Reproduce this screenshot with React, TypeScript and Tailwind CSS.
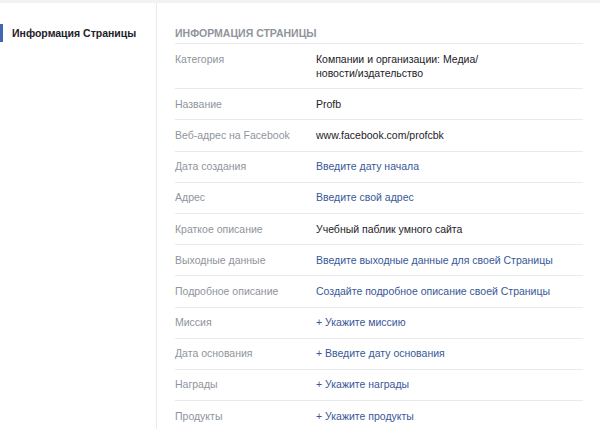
const rows: { label: string; value: React.ReactNode; link?: boolean }[] = [
  {
    label: "Категория",
    value: (
      <>
        Компании и организации: Медиа/ <span className="whitespace-nowrap">новости/издательство</span>
      </>
    ),
  },
  { label: "Название", value: "Profb" },
  { label: "Веб-адрес на Facebook", value: "www.facebook.com/profcbk" },
  { label: "Дата создания", value: "Введите дату начала", link: true },
  { label: "Адрес", value: "Введите свой адрес", link: true },
  { label: "Краткое описание", value: "Учебный паблик умного сайта" },
  { label: "Выходные данные", value: "Введите выходные данные для своей Страницы", link: true },
  { label: "Подробное описание", value: "Создайте подробное описание своей Страницы", link: true },
  { label: "Миссия", value: "+ Укажите миссию", link: true },
  { label: "Дата основания", value: "+ Введите дату основания", link: true },
  { label: "Награды", value: "+ Укажите награды", link: true },
  { label: "Продукты", value: "+ Укажите продукты", link: true },
];

export default function App() {
  return (
    <div
      className="flex h-[429px] w-[600px] overflow-hidden border-t-[3px] border-[#f1f2f4] bg-white text-[10.5px] leading-[14px]"
      style={{ fontFamily: '"Liberation Sans", Arial, sans-serif' }}
    >
      {/* left nav */}
      <aside className="w-[157px] shrink-0 border-r border-[#e9eaed] pt-[21px]">
        <div className="flex h-[18px] items-center border-l-[3px] border-[#4267b2] pl-[9px] font-bold text-[#1d2129]">
          Информация Страницы
        </div>
      </aside>

      {/* page info */}
      <main className="flex-1 pl-[18px] pr-[17px]">
        <h2 className="border-b border-[#e9eaed] pb-[3px] pt-[23px] font-bold uppercase text-[#90949c]">
          Информация Страницы
        </h2>
        {rows.map((row) => (
          <div key={row.label} className="flex border-b border-[#e9eaed] pb-[8.6px] pt-[7.6px]">
            <div className="w-[141px] shrink-0 text-[#90949c]">{row.label}</div>
            <div className={row.link ? "max-w-[240px] text-[#385898]" : "max-w-[240px] text-[#1d2129]"}>
              {row.value}
            </div>
          </div>
        ))}
      </main>
    </div>
  );
}
